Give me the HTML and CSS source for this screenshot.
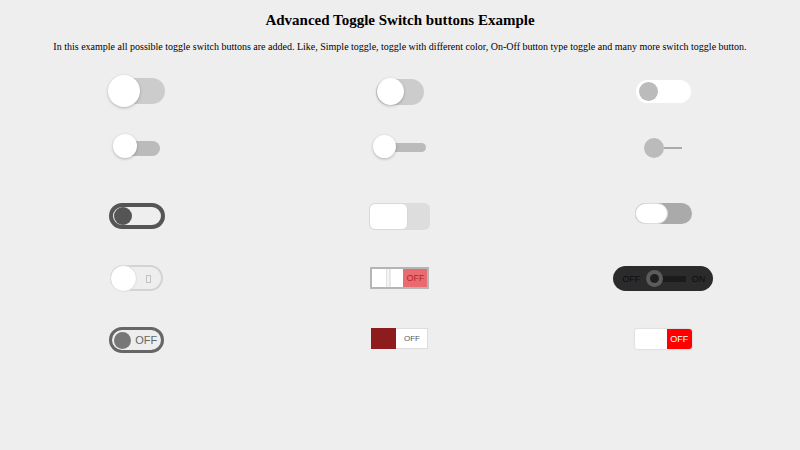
FILE: index.html
```html
<!DOCTYPE html>
<html>
<head>
    <title>Advanced Toggle Switch buttons</title>
    <link rel="stylesheet" href="styles.css">
</head>
<body>
    <h1>Advanced Toggle Switch buttons Example</h1>
    <p class="intro">In this example all possible toggle switch buttons are added. Like, Simple toggle, toggle with different color, On-Off button type toggle and many more switch toggle button.</p>

    <div class="toggles">
        <!-- row 1 -->
        <div class="cell">
            <label class="switch big">
                <input type="checkbox">
                <span class="track"></span>
                <span class="knob"></span>
            </label>
        </div>
        <div class="cell">
            <label class="switch round">
                <input type="checkbox">
                <span class="track"></span>
                <span class="knob"></span>
            </label>
        </div>
        <div class="cell">
            <label class="switch inset">
                <input type="checkbox">
                <span class="knob"></span>
            </label>
        </div>

        <!-- row 2 -->
        <div class="cell">
            <label class="switch thin">
                <input type="checkbox">
                <span class="track"></span>
                <span class="knob"></span>
            </label>
        </div>
        <div class="cell">
            <label class="switch slim">
                <input type="checkbox">
                <span class="track"></span>
                <span class="knob"></span>
            </label>
        </div>
        <div class="cell">
            <label class="switch line">
                <input type="checkbox">
                <span class="knob"></span>
                <span class="wire"></span>
            </label>
        </div>

        <!-- row 3 -->
        <div class="cell">
            <label class="switch outline">
                <input type="checkbox">
                <span class="knob"></span>
            </label>
        </div>
        <div class="cell">
            <label class="switch square">
                <input type="checkbox">
                <span class="knob"></span>
            </label>
        </div>
        <div class="cell">
            <label class="switch pill">
                <input type="checkbox">
                <span class="knob"></span>
            </label>
        </div>

        <!-- row 4 -->
        <div class="cell">
            <label class="switch ios">
                <input type="checkbox">
                <span class="knob"></span>
                <span class="mark"></span>
            </label>
        </div>
        <div class="cell">
            <label class="switch grip">
                <input type="checkbox">
                <span class="knob"></span>
                <span class="state">OFF</span>
            </label>
        </div>
        <div class="cell">
            <label class="switch dark">
                <input type="checkbox">
                <span class="word">OFF</span>
                <span class="rail"><span class="knob"></span></span>
                <span class="word">ON</span>
            </label>
        </div>

        <!-- row 5 -->
        <div class="cell">
            <label class="switch text">
                <input type="checkbox">
                <span class="knob"></span>
                <span class="state">OFF</span>
            </label>
        </div>
        <div class="cell">
            <label class="switch block">
                <input type="checkbox">
                <span class="knob"></span>
                <span class="state">OFF</span>
            </label>
        </div>
        <div class="cell">
            <label class="switch flat">
                <input type="checkbox">
                <span class="knob"></span>
                <span class="state">OFF</span>
            </label>
        </div>
    </div>
</body>
</html>
```

FILE: styles.css
```css
body {
    margin: 0;
    background-color: #eeeeee;
    font-family: "Liberation Serif", "Times New Roman", serif;
    color: #000;
}
h1 {
    font-size: 15px;
    line-height: 22px;
    margin: 9px 0 0;
    text-align: center;
}
.intro {
    font-size: 10px;
    line-height: 16px;
    margin: 8px 0 0;
    text-align: center;
}
.toggles {
    display: grid;
    grid-template-columns: repeat(3, 1fr);
    grid-template-rows: 50px 60px 80px 44px 80px;
    padding: 0 5px;
    margin-top: 11px;
}
.cell {
    display: flex;
    align-items: center;
    justify-content: center;
}

/* base switch */
.switch {
    position: relative;
    display: inline-block;
    cursor: pointer;
    font-family: "Liberation Sans", Arial, sans-serif;
}
.switch input {
    display: none;
}
.switch .track {
    position: absolute;
    display: block;
}
.switch .knob {
    position: absolute;
    display: block;
    border-radius: 50%;
}

/* row 1 */
.big {
    width: 57px;
    height: 33px;
}
.big .track {
    left: 4px;
    right: 0;
    top: 3px;
    height: 26px;
    border-radius: 13px;
    background-color: #cccccc;
}
.big .knob {
    left: 0;
    top: 0;
    width: 32px;
    height: 32px;
    background-color: #fff;
    box-shadow: 0 1px 3px rgba(0, 0, 0, 0.25);
}

.round {
    width: 48px;
    height: 27px;
}
.round .track {
    left: 0;
    right: 0;
    top: 1px;
    height: 26px;
    border-radius: 13px;
    background-color: #cccccc;
}
.round .knob {
    left: 1px;
    top: 0;
    width: 27px;
    height: 27px;
    background-color: #fff;
    box-shadow: 0 1px 3px rgba(0, 0, 0, 0.25);
}

.inset {
    width: 55px;
    height: 23px;
    border-radius: 12px;
    background-color: #fff;
}
.inset .knob {
    left: 3px;
    top: 2px;
    width: 19px;
    height: 19px;
    background-color: #bbbbbb;
}

/* row 2 */
.thin {
    width: 47px;
    height: 24px;
}
.thin .track {
    left: 4px;
    right: 0;
    top: 7px;
    height: 15px;
    border-radius: 8px;
    background-color: #bbbbbb;
}
.thin .knob {
    left: 0;
    top: 0;
    width: 24px;
    height: 24px;
    background-color: #fff;
    box-shadow: 0 1px 3px rgba(0, 0, 0, 0.25);
}

.slim {
    width: 53px;
    height: 23px;
}
.slim .track {
    left: 10px;
    right: 0;
    top: 8px;
    height: 9px;
    border-radius: 5px;
    background-color: #bbbbbb;
}
.slim .knob {
    left: 0;
    top: 0;
    width: 23px;
    height: 23px;
    background-color: #fff;
    box-shadow: 0 1px 3px rgba(0, 0, 0, 0.25);
}

.line {
    display: flex;
    align-items: center;
    width: 38px;
    height: 20px;
    margin-top: 4px;
}
.line .knob {
    position: static;
    width: 20px;
    height: 20px;
    background-color: #bbbbbb;
}
.line .wire {
    width: 18px;
    height: 2px;
    background-color: #aaaaaa;
}

/* row 3 */
.outline {
    box-sizing: border-box;
    width: 56px;
    height: 26px;
    border: 4px solid #555555;
    border-radius: 13px;
}
.outline .knob {
    left: 1px;
    top: 0;
    width: 18px;
    height: 18px;
    background-color: #555555;
}

.square {
    width: 61px;
    height: 27px;
    border-radius: 6px;
    background-color: #dddddd;
}
.square .knob {
    box-sizing: border-box;
    left: 0;
    top: 0;
    width: 39px;
    height: 27px;
    border-radius: 6px;
    border: 1px solid #d8d8d8;
    background-color: #fff;
}

.pill {
    width: 57px;
    height: 21px;
    border-radius: 11px;
    background-color: #aaaaaa;
    margin-top: -5px;
}
.pill .knob {
    box-sizing: border-box;
    left: 0;
    top: 0;
    width: 33px;
    height: 21px;
    border-radius: 11px;
    border: 1px solid #dddddd;
    background-color: #fff;
}

/* row 4 */
.ios {
    box-sizing: border-box;
    width: 53px;
    height: 26px;
    border: 2px solid #d3d3d3;
    border-radius: 13px;
    background-color: #eeeeee;
}
.ios .knob {
    box-sizing: border-box;
    left: -2px;
    top: -2px;
    width: 27px;
    height: 27px;
    border: 1px solid #dddddd;
    background-color: #fff;
}
.ios .mark {
    position: absolute;
    left: 34px;
    top: 8px;
    width: 3px;
    height: 6px;
    border: 1px solid #c4c4c4;
}

.grip {
    box-sizing: border-box;
    display: flex;
    width: 59px;
    height: 22px;
    border: 2px solid #b5b5b5;
    background-color: #e96b70;
}
.grip .knob {
    position: static;
    width: 31px;
    height: 100%;
    border-radius: 0;
    background: linear-gradient(to right, #fff 0, #fff 14px, #cfcfcf 14px, #f4f4f4 15px, #f4f4f4 17px, #d6d6d6 18px, #fff 19px);
}
.grip .state {
    flex: 1;
    font-size: 9px;
    line-height: 18px;
    color: #b3262b;
    text-align: center;
}

.dark {
    display: flex;
    align-items: center;
    box-sizing: border-box;
    width: 100px;
    height: 25px;
    padding: 0 8px 0 9px;
    border-radius: 13px;
    background-color: #2b2b2b;
    margin-top: 1px;
}
.dark .word {
    font-size: 9px;
    color: #0d0d0d;
}
.dark .rail {
    display: flex;
    align-items: center;
    width: 44px;
    height: 17px;
    margin: 0 6px 0 6px;
    background: linear-gradient(#1b1b1b, #1b1b1b) no-repeat 0 center / 100% 6px;
}
.dark .rail .knob {
    position: static;
    box-sizing: border-box;
    width: 17px;
    height: 17px;
    border: 4px solid #5c5c5c;
    background-color: #1f1f1f;
}

/* row 5 */
.text {
    display: flex;
    align-items: center;
    box-sizing: border-box;
    width: 55px;
    height: 26px;
    padding-left: 2px;
    border: 3px solid #666666;
    border-radius: 13px;
}
.text .knob {
    position: static;
    width: 17px;
    height: 17px;
    background-color: #777777;
}
.text .state {
    margin-left: 4px;
    font-size: 11px;
    color: #666666;
}

.block {
    display: flex;
    width: 57px;
    height: 21px;
    margin-top: -3px;
}
.block .knob {
    position: static;
    width: 25px;
    height: 100%;
    border-radius: 0;
    background-color: #8e1c1c;
}
.block .state {
    box-sizing: border-box;
    flex: 1;
    border: 1px solid #dddddd;
    border-left: 0;
    background-color: #fff;
    font-size: 8px;
    line-height: 19px;
    color: #555555;
    text-align: center;
}

.flat {
    display: flex;
    width: 57px;
    height: 20px;
    border-radius: 3px;
    overflow: hidden;
    box-shadow: 0 0 2px rgba(0, 0, 0, 0.2);
    margin-top: -2px;
}
.flat .knob {
    position: static;
    width: 32px;
    height: 100%;
    border-radius: 0;
    background-color: #fff;
}
.flat .state {
    flex: 1;
    background-color: #ff0000;
    font-size: 9px;
    line-height: 20px;
    color: #fff;
    text-align: center;
}
```
